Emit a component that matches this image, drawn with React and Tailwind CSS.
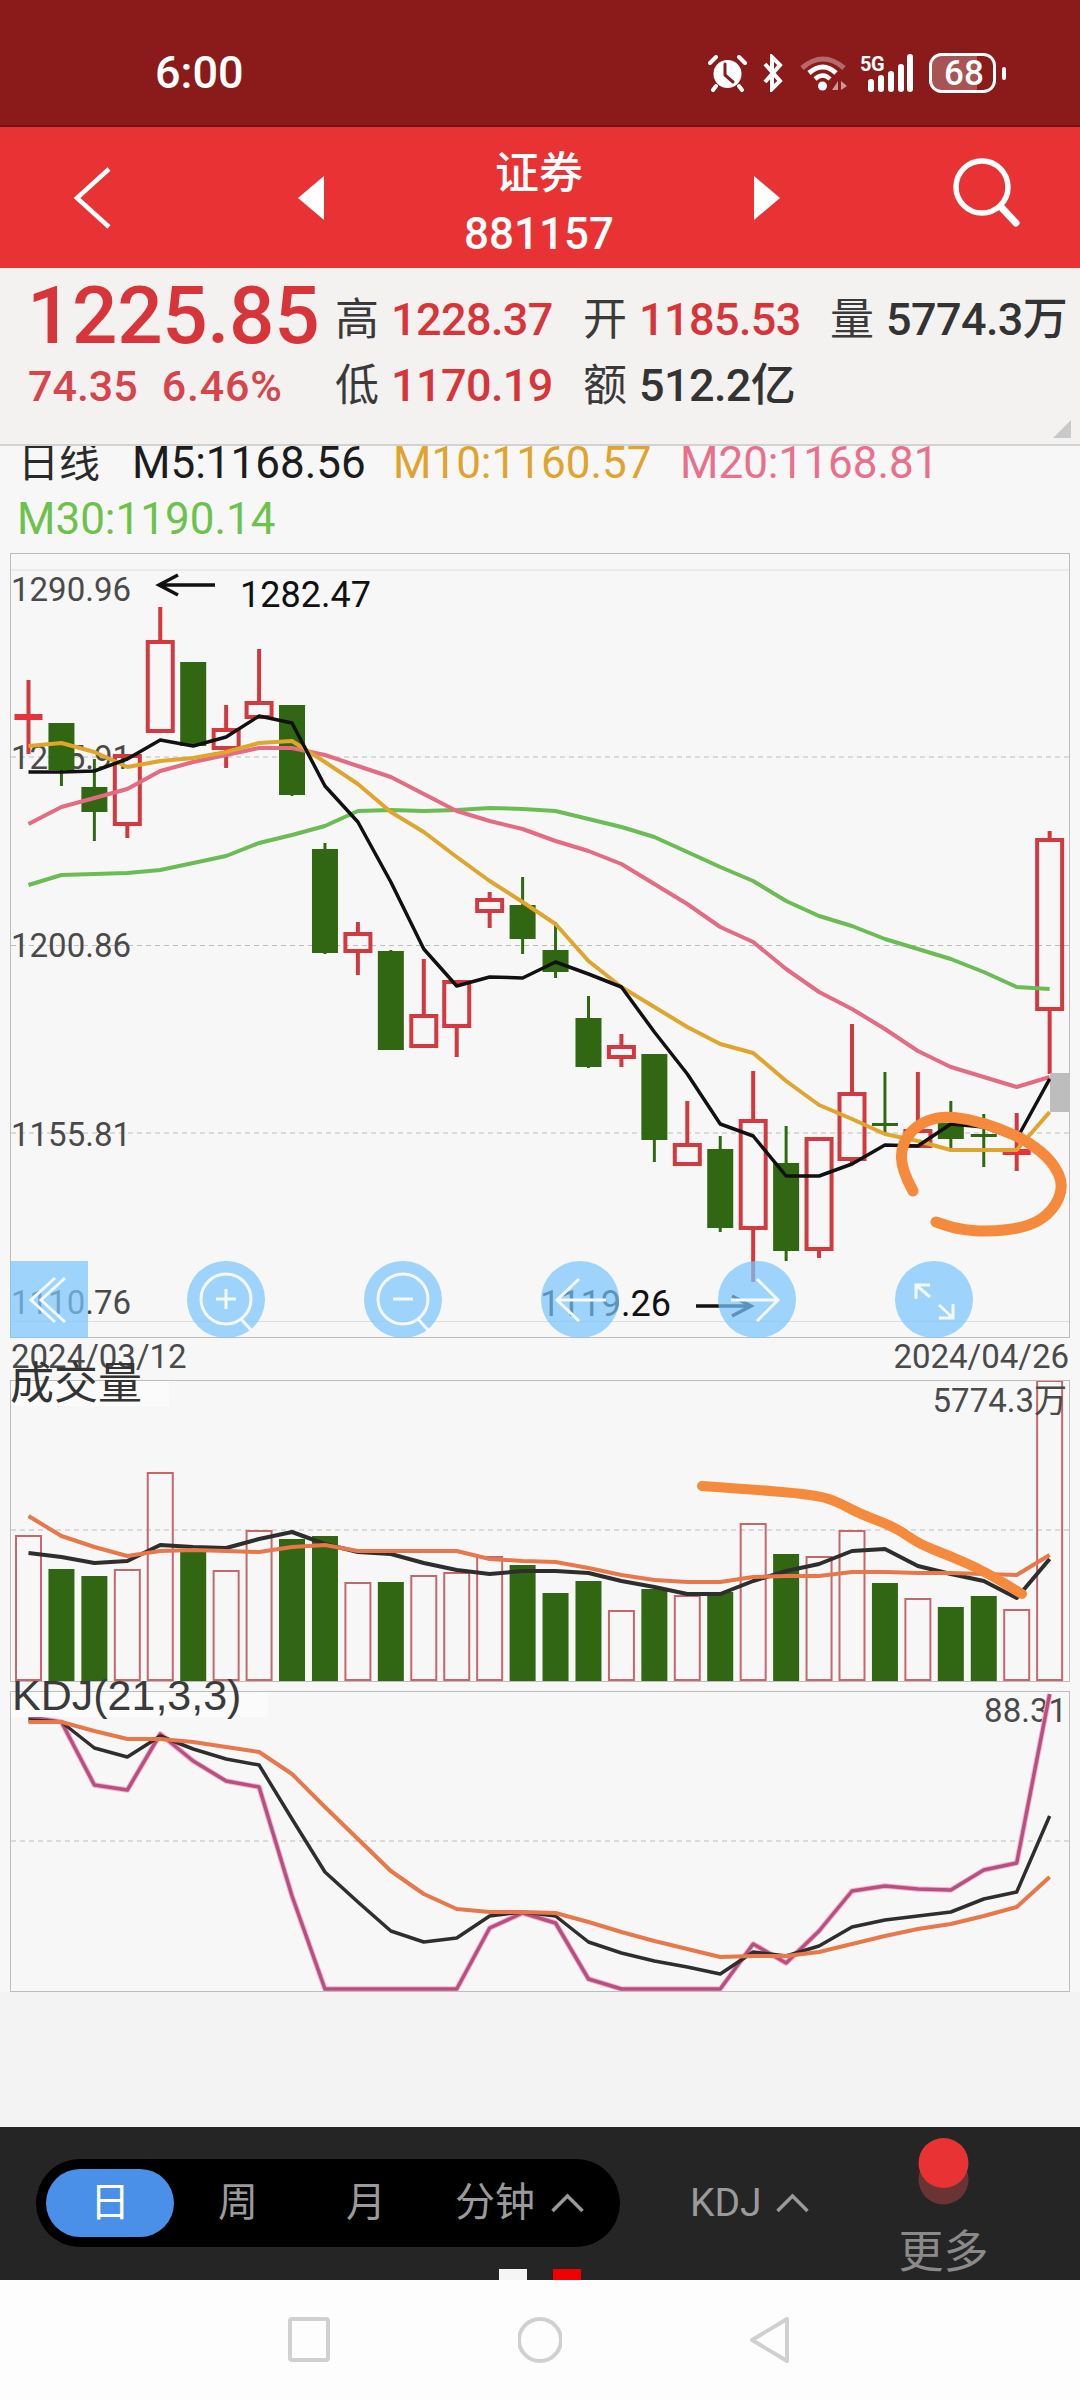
import React from "react";

const X = (i) => 28.5 + 32.94 * i;

// wickTop, bodyTop, bodyBottom, wickBottom, kind (g / r / gd, rd = doji)
const candles = [
  [681, 715, 721, 755, "rd"],
  [724, 724, 771, 787, "g"],
  [760, 788, 813, 842, "g"],
  [757, 757, 825, 839, "r"],
  [608, 643, 732, 734, "r"],
  [663, 663, 747, 747, "g"],
  [706, 731, 749, 769, "r"],
  [650, 704, 718, 718, "r"],
  [706, 706, 796, 797, "g"],
  [844, 850, 954, 955, "g"],
  [923, 935, 952, 976, "r"],
  [951, 952, 1051, 1051, "g"],
  [960, 1017, 1047, 1048, "r"],
  [983, 983, 1027, 1058, "r"],
  [893, 901, 912, 929, "r"],
  [878, 906, 940, 955, "g"],
  [923, 951, 973, 979, "g"],
  [997, 1019, 1068, 1069, "g"],
  [1035, 1048, 1058, 1068, "r"],
  [1055, 1055, 1141, 1163, "g"],
  [1102, 1146, 1165, 1165, "r"],
  [1137, 1150, 1229, 1233, "g"],
  [1072, 1122, 1229, 1283, "r"],
  [1127, 1164, 1252, 1262, "g"],
  [1140, 1140, 1250, 1259, "r"],
  [1025, 1095, 1160, 1165, "r"],
  [1073, 1124, 1127, 1135, "gd"],
  [1073, 1132, 1147, 1149, "r"],
  [1102, 1124, 1140, 1150, "g"],
  [1115, 1135, 1138, 1168, "gd"],
  [1114, 1150, 1156, 1172, "rd"],
  [832, 841, 1010, 1075, "r"],
];

const m5 = [773, 773, 772, 760, 741, 747, 738, 717, 724, 787, 823, 883, 950, 987, 978, 979, 963, 975, 988, 1033, 1075, 1125, 1137, 1177, 1177, 1165, 1146, 1147, 1125, 1128, 1140, 1080];
const m10 = [747, 744, 753, 768, 762, 759, 753, 744, 742, 763, 785, 813, 833, 858, 882, 903, 925, 962, 988, 1008, 1028, 1045, 1054, 1082, 1106, 1120, 1135, 1142, 1151, 1151, 1151, 1113];
const m20 = [825, 808, 799, 790, 772, 763, 756, 749, 749, 756, 767, 778, 795, 812, 822, 830, 842, 852, 865, 885, 905, 928, 943, 970, 993, 1010, 1030, 1052, 1068, 1078, 1088, 1078];
const m30 = [886, 876, 875, 874, 871, 864, 857, 844, 836, 827, 812, 811, 812, 811, 809, 810, 812, 820, 828, 838, 853, 868, 882, 902, 917, 927, 940, 950, 960, 973, 988, 990];

const volumes = [
  [1537, "r"], [1570, "g"], [1577, "g"], [1571, "r"], [1474, "r"], [1552, "g"], [1572, "r"], [1532, "r"],
  [1540, "g"], [1537, "g"], [1584, "r"], [1583, "g"], [1577, "r"], [1574, "r"], [1558, "r"], [1566, "g"],
  [1594, "g"], [1582, "g"], [1612, "r"], [1590, "g"], [1597, "r"], [1593, "g"], [1525, "r"], [1555, "g"],
  [1558, "r"], [1532, "r"], [1584, "g"], [1600, "r"], [1608, "g"], [1597, "g"], [1611, "r"], [1382, "r"],
];
const volBlack = [1554, 1558, 1564, 1562, 1546, 1548, 1549, 1540, 1533, 1545, 1553, 1555, 1564, 1571, 1575, 1572, 1572, 1574, 1582, 1588, 1595, 1595, 1582, 1572, 1565, 1552, 1550, 1567, 1575, 1582, 1599, 1560];
const volOrange = [1517, 1537, 1548, 1557, 1552, 1551, 1552, 1553, 1548, 1546, 1552, 1552, 1552, 1552, 1560, 1562, 1563, 1569, 1576, 1581, 1583, 1583, 1578, 1577, 1577, 1573, 1573, 1574, 1574, 1575, 1576, 1556];

const kdjK = [1721, 1723, 1749, 1758, 1737, 1750, 1760, 1766, 1820, 1873, 1903, 1932, 1943, 1939, 1917, 1913, 1917, 1943, 1954, 1962, 1968, 1975, 1953, 1957, 1947, 1928, 1921, 1917, 1913, 1900, 1893, 1817];
const kdjD = [1723, 1723, 1732, 1740, 1740, 1743, 1748, 1753, 1775, 1808, 1840, 1872, 1895, 1910, 1913, 1913, 1914, 1923, 1933, 1942, 1950, 1958, 1957, 1957, 1953, 1945, 1937, 1930, 1925, 1917, 1908, 1878];
const kdjJ = [1718, 1723, 1786, 1791, 1735, 1762, 1782, 1788, 1897, 1990, 1990, 1990, 1990, 1990, 1929, 1914, 1924, 1980, 1990, 1990, 1990, 1990, 1945, 1964, 1932, 1892, 1887, 1890, 1891, 1871, 1864, 1695];

const linePts = (ys) => ys.map((y, i) => `${X(i)},${y}`).join(" ");

// hand drawn strokes, smoothed through midpoints
const smooth = (pts) => {
  let d = `M${pts[0][0]} ${pts[0][1]}`;
  for (let i = 1; i < pts.length - 1; i++) {
    const mx = (pts[i][0] + pts[i + 1][0]) / 2;
    const my = (pts[i][1] + pts[i + 1][1]) / 2;
    d += ` Q${pts[i][0]} ${pts[i][1]} ${mx} ${my}`;
  }
  const last = pts[pts.length - 1];
  return d + ` L${last[0]} ${last[1]}`;
};

const circleStroke = smooth([
  [913, 1192], [902, 1172], [901, 1147], [915, 1127], [939, 1117], [970, 1120], [1001, 1130], [1029, 1143],
  [1053, 1163], [1064, 1187], [1053, 1212], [1029, 1228], [988, 1233], [957, 1230], [936, 1223],
]);
const volStroke = smooth([
  [702, 1487], [760, 1491], [815, 1496], [836, 1502], [860, 1515], [895, 1528], [919, 1545], [950, 1557], [984, 1572], [1022, 1595],
]);

function Candle({ c, i }) {
  const [top, bodyTop, bodyBottom, bottom, kind] = c;
  const x = X(i);
  const green = kind[0] === "g";
  const wick = green ? "#2f6a12" : "#d2393f";
  const wickW = green ? 3 : 4;
  return (
    <g>
      <line x1={x} x2={x} y1={top} y2={bodyTop} stroke={wick} strokeWidth={wickW} />
      <line x1={x} x2={x} y1={bodyBottom} y2={bottom} stroke={wick} strokeWidth={wickW} />
      {kind === "g" && <rect x={x - 13} y={bodyTop} width={26} height={bodyBottom - bodyTop} fill="#316612" />}
      {kind === "r" && (
        <rect x={x - 12.5} y={bodyTop} width={25} height={bodyBottom - bodyTop} fill="none" stroke="#d03a40" strokeWidth={4} />
      )}
      {kind === "gd" && <rect x={x - 13} y={bodyTop} width={26} height={3} fill="#316612" />}
      {kind === "rd" && <rect x={x - 14} y={bodyTop} width={28} height={bodyBottom - bodyTop} fill="#e8323a" />}
    </g>
  );
}

function RoundBtn({ children, square }) {
  return (
    <div className={`w-[78px] h-[77px] bg-[rgba(124,198,252,0.72)] ${square ? "" : "rounded-full"}`}>
      <svg viewBox="0 0 78 77" className="w-full h-full" fill="none" stroke="#f4f9fd" strokeWidth="3">
        {children}
      </svg>
    </div>
  );
}

function Cell({ label, value, red, width }) {
  return (
    <div className={`flex items-center ${width}`}>
      <span className="-ml-[2px] text-[44px] text-[#3a3a3a]">{label}</span>
      <span className={`ml-[12px] text-[45px] font-medium tracking-[-0.6px] ${red ? "text-[#d8353b]" : "text-[#333333]"}`}>{value}</span>
    </div>
  );
}

function Chevron() {
  return (
    <svg viewBox="0 0 33 20" className="w-[33px] h-[20px]" fill="none" stroke="#9a9a9a" strokeWidth="3.5">
      <path d="M1.5 18 L16.5 3 L31.5 18" />
    </svg>
  );
}

export default function App() {
  return (
    <div className="w-[1080px] h-[2400px] flex flex-col overflow-hidden bg-[#f7f7f7] font-['Roboto','Noto_Sans_CJK_SC',sans-serif]">
      {/* status bar */}
      <div className="h-[127px] pt-[20px] flex items-center bg-[#8b1b1b] border-b-2 border-[#6f1414] text-white">
        <span className="ml-[155px] text-[45px] font-medium">6:00</span>
        <div className="ml-auto mr-[74px] flex items-center">
          <svg viewBox="0 0 39 38" className="w-[39px] h-[38px]" fill="none" stroke="#fff" strokeLinecap="round">
            <circle cx="19.5" cy="20" r="14" fill="#fff" stroke="none" />
            <path d="M17 10 L17 21 L25 28" stroke="#8b1b1b" strokeWidth="3" />
            <path d="M2 9 L8 3 M37 9 L31 3 M8 32 L5 36 M31 32 L34 36" strokeWidth="4" />
          </svg>
          <svg viewBox="0 0 21 38" className="ml-[15px] w-[21px] h-[38px]" fill="none" stroke="#fff" strokeWidth="4">
            <path d="M3 10 L18 27 L10 35 L10 3 L18 11 L3 28" />
          </svg>
          <svg viewBox="0 0 47 37" className="ml-[17px] w-[47px] h-[37px]" fill="none" stroke="#fff" strokeWidth="5">
            <path d="M2 14 Q23 -4 44 14" opacity="0.35" />
            <path d="M9 19 Q23 7 36 19" />
            <path d="M15 25 Q23 18 30 25" strokeWidth="4.5" />
            <circle cx="22.5" cy="32" r="4.5" fill="#fff" stroke="none" />
            <path d="M32 36 L38 27 L38 36 Z M41 27 L47 32 L41 36 Z" fill="#fff" stroke="none" opacity="0.55" />
          </svg>
          <div className="relative ml-[13px] w-[53px] h-[38px]">
            <svg viewBox="0 0 53 38" className="w-[53px] h-[38px]" fill="#fff">
              <rect x="8" y="25" width="6" height="13" rx="3" />
              <rect x="18" y="21" width="6" height="17" rx="3" />
              <rect x="28" y="17" width="6" height="21" rx="3" />
              <rect x="38" y="10" width="6" height="28" rx="3" />
              <rect x="47" y="0" width="6" height="38" rx="3" />
            </svg>
            <span className="absolute left-0 top-0 text-[20px] leading-[20px] font-bold tracking-[-0.5px]">5G</span>
          </div>
          <svg viewBox="0 0 77 40" className="ml-[16px] w-[77px] h-[40px]">
            <path d="M13 2 H48 V38 H13 A11 11 0 0 1 2 27 V13 A11 11 0 0 1 13 2 Z" fill="#fff" opacity="0.25" />
            <rect x="1.5" y="1.5" width="64" height="37" rx="11" fill="none" stroke="#fff" strokeWidth="3" />
            <rect x="73" y="14" width="4" height="13" rx="2" fill="#fff" />
            <text x="35" y="32" fontSize="35" fontWeight="500" fill="#fff" textAnchor="middle">68</text>
          </svg>
        </div>
      </div>

      {/* title bar */}
      <div className="h-[141px] pl-[72px] flex items-center bg-[#e83233] text-white">
        <svg viewBox="0 0 41 62" className="w-[41px] h-[62px]" fill="none" stroke="#fff" strokeWidth="4.5">
          <path d="M37 2 L5 31 L37 60" />
        </svg>
        <svg viewBox="0 0 26 44" className="ml-[185px] w-[26px] h-[44px]" fill="#fff">
          <path d="M26 0 V44 L0 22 Z" />
        </svg>
        <div className="w-[430px] pt-[12px] flex flex-col items-center font-medium text-[44px]">
          <span className="h-[60px] leading-[60px]">证券</span>
          <span className="h-[60px] leading-[60px]">881157</span>
        </div>
        <svg viewBox="0 0 26 44" className="w-[26px] h-[44px]" fill="#fff">
          <path d="M0 0 V44 L26 22 Z" />
        </svg>
        <svg viewBox="0 0 72 72" className="ml-[170px] w-[72px] h-[72px] -mt-[10px]" fill="none" stroke="#fff" strokeWidth="5.5">
          <circle cx="32" cy="30" r="26" />
          <path d="M51 50 L66 66" strokeLinecap="round" strokeWidth="7" />
        </svg>
      </div>

      {/* quote */}
      <div className="relative h-[178px] pt-[20px] bg-[#f3f2f1] border-b-2 border-[#d2d2d2]">
        <div className="flex items-center h-[64px]">
          <div className="w-[337px] pl-[27px] text-[80px] leading-[56px] mb-[8px] font-medium tracking-[-0.4px] text-[#d8353b]">1225.85</div>
          <Cell label="高" value="1228.37" red width="w-[248px]" />
          <Cell label="开" value="1185.53" red width="w-[247px]" />
          <Cell label="量" value="5774.3万" />
        </div>
        <div className="flex items-center h-[64px] mt-[2px]">
          <div className="w-[337px] pl-[28px] flex gap-[24px] text-[43px] font-medium text-[#d8444a]">
            <span>74.35</span>
            <span className="tracking-[0.8px]">6.46%</span>
          </div>
          <Cell label="低" value="1170.19" red width="w-[248px]" />
          <Cell label="额" value="512.2亿" />
        </div>
        <svg viewBox="0 0 18 18" className="absolute right-[9px] bottom-[6px] w-[18px] h-[18px]" fill="#c9c9c9">
          <path d="M18 0 V18 H0 Z" />
        </svg>
      </div>

      {/* moving average legend */}
      <div className="h-[107px] text-[44px] leading-[34px]">
        <div className="h-[34px] pl-[18px] flex">
          <span className="w-[114px] text-[41px] text-[#2a2a2a]">日线</span>
          <span className="w-[261px] text-[#1c1c1c]">M5:1168.56</span>
          <span className="w-[287px] text-[#e0a32e]">M10:1160.57</span>
          <span className="text-[#e8708a]">M20:1168.81</span>
        </div>
        <div className="h-[34px] mt-[22px] pl-[17px] text-[#6cc24a]">M30:1190.14</div>
      </div>

      {/* k line panel */}
      <div className="relative ml-[10px] w-[1060px] h-[785px] border border-[#bdbdbd]">
        <svg viewBox="11 555 1058 783" className="block w-full h-full">
          <line x1="11" x2="1069" y1="571" y2="571" stroke="#dedede" />
          <line x1="11" x2="1069" y1="1322.5" y2="1322.5" stroke="#dedede" />
          {[758, 946.5, 1134].map((y) => (
            <line key={y} x1="11" x2="1069" y1={y} y2={y} stroke="#bdbdbd" strokeDasharray="5 4" />
          ))}
          <g fontSize="33" fill="#4a4a4a">
            <text x="11" y="602">1290.96</text>
            <text x="11" y="770">1245.91</text>
            <text x="11" y="958">1200.86</text>
            <text x="11" y="1147">1155.81</text>
            <text x="11" y="1315">1110.76</text>
          </g>
          <g fontSize="36" fill="#111">
            <text x="240" y="608">1282.47</text>
            <text x="540" y="1317">1119.26</text>
          </g>
          <path d="M215 586 H160 M178 576 L159 586 L178 596" fill="none" stroke="#111" strokeWidth="3.5" />
          <path d="M696 1307 H750 M732 1297 L751 1307 L732 1317" fill="none" stroke="#111" strokeWidth="3.5" />
          {candles.map((c, i) => (
            <Candle key={i} c={c} i={i} />
          ))}
          <rect x="1050" y="1074" width="19" height="39" fill="#bdbdbd" />
          <g fill="none" strokeLinejoin="round">
            <polyline points={linePts(m30)} stroke="#6cbc55" strokeWidth="4" />
            <polyline points={linePts(m20)} stroke="#e36b82" strokeWidth="4" />
            <polyline points={linePts(m10)} stroke="#e0a52c" strokeWidth="4" />
            <polyline points={linePts(m5)} stroke="#111" strokeWidth="3.5" />
            <path d={circleStroke} stroke="#f58a3c" strokeWidth="11" strokeLinecap="round" />
          </g>
        </svg>
        <div className="absolute -left-px -bottom-px flex gap-[99px]">
          <RoundBtn square>
            <path d="M55 17 L31 39 L55 61 M45 17 L21 39 L45 61" />
          </RoundBtn>
          <RoundBtn>
            <circle cx="39" cy="38" r="25" />
            <path d="M54 58 L64 69" />
            <path d="M29 38 H49 M39 28 V48" />
          </RoundBtn>
          <RoundBtn>
            <circle cx="39" cy="38" r="25" />
            <path d="M54 58 L64 69" />
            <path d="M29 38 H49" />
          </RoundBtn>
          <RoundBtn>
            <path d="M65 39 H16 M38 18 L16 39 L38 60" />
          </RoundBtn>
          <RoundBtn>
            <path d="M13 39 H60 M39 18 L60 39 L39 60" />
          </RoundBtn>
          <RoundBtn>
            <path d="M21 24 L35 36 M21 38 V24 H35 M58 57 L44 44 M58 43 V57 H44" />
          </RoundBtn>
        </div>
      </div>

      {/* date range */}
      <div className="h-[42px] pl-[11px] pr-[11px] flex justify-between text-[33px] leading-[38px] text-[#4a4a4a]">
        <span>2024/03/12</span>
        <span>2024/04/26</span>
      </div>

      {/* volume panel */}
      <div className="relative ml-[10px] w-[1060px] h-[302px] mb-[9px] border border-[#bdbdbd]">
        <svg viewBox="11 1382 1058 300" className="block w-full h-full">
          <line x1="11" x2="1069" y1="1531" y2="1531" stroke="#bdbdbd" strokeDasharray="5 4" />
          {volumes.map(([top, kind], i) =>
            kind === "g" ? (
              <rect key={i} x={X(i) - 13} y={top} width={26} height={1682 - top} fill="#316612" />
            ) : (
              <rect key={i} x={X(i) - 12.5} y={top} width={25} height={1681 - top} fill="none" stroke="#c4686c" strokeWidth="2" />
            )
          )}
          <text x="1067" y="1413" fontSize="33" fill="#4a4a4a" textAnchor="end">5774.3万</text>
          <g fill="none" strokeLinejoin="round">
            <polyline points={linePts(volBlack)} stroke="#2e2e2e" strokeWidth="4" />
            <polyline points={linePts(volOrange)} stroke="#e8784a" strokeWidth="4" />
            <path d={volStroke} stroke="#f58a3c" strokeWidth="10" strokeLinecap="round" />
          </g>
        </svg>
        <div className="absolute left-0 top-0 w-[158px] h-[25px] bg-[#fbfbfb]" />
        <div className="absolute -left-[1px] -top-[19px] text-[44px] leading-[44px] text-[#333333]">成交量</div>
      </div>

      {/* kdj panel */}
      <div className="relative ml-[10px] w-[1060px] h-[301px] border border-[#bdbdbd]">
        <svg viewBox="11 1693 1058 299" className="block w-full h-full">
          <line x1="11" x2="1069" y1="1842" y2="1842" stroke="#bdbdbd" strokeDasharray="5 4" />
          <text x="1067" y="1723" fontSize="33" fill="#4a4a4a" textAnchor="end">88.31</text>
          <g fill="none" strokeLinejoin="round">
            <polyline points={linePts(kdjJ)} stroke="#f3b4d2" strokeWidth="5.5" />
            <polyline points={linePts(kdjJ)} stroke="#b8507f" strokeWidth="3.5" />
            <polyline points={linePts(kdjK)} stroke="#2e2e2e" strokeWidth="3.5" />
            <polyline points={linePts(kdjD)} stroke="#e8784a" strokeWidth="4" />
          </g>
        </svg>
        <div className="absolute left-0 top-0 w-[257px] h-[25px] bg-[#fbfbfb]" />
        <div className="absolute left-[1px] -top-[21px] text-[43px] leading-[48px] text-[#3a3a3a] font-['Liberation_Sans',sans-serif]">KDJ(21,3,3)</div>
      </div>

      <div className="flex-1 bg-[#f3f3f3]" />

      {/* period toolbar */}
      <div className="relative h-[153px] pt-[32px] flex items-start bg-[#252525] text-[#9a9a9a]">
        <div className="ml-[36px] w-[584px] h-[88px] pl-[10px] flex items-center rounded-full bg-black text-[40px]">
          <div className="w-[128px] h-[68px] flex items-center justify-center rounded-full bg-[#4a90e8] text-white">日</div>
          <div className="w-[128px] text-center">周</div>
          <div className="w-[128px] text-center">月</div>
          <div className="ml-[25px] flex items-center gap-[16px]">
            <span>分钟</span>
            <Chevron />
          </div>
        </div>
        <div className="ml-[70px] h-[88px] flex items-center gap-[14px] text-[39px]">
          <span>KDJ</span>
          <Chevron />
        </div>
        <div className="ml-[90px] -mt-[21px] w-[90px] flex flex-col items-center">
          <svg viewBox="0 0 51 67" className="w-[51px] h-[67px]">
            <circle cx="25.5" cy="41.5" r="25" fill="#6b3434" />
            <circle cx="25.5" cy="25" r="25" fill="#e83233" />
          </svg>
          <span className="mt-[25px] text-[45px] leading-[45px] text-[#8a8a8a]">更多</span>
        </div>
        <div className="absolute left-[499px] bottom-0 w-[28px] h-[11px] bg-[#f5f5f5]" />
        <div className="absolute left-[553px] bottom-0 w-[28px] h-[11px] bg-[#f00000]" />
      </div>

      {/* android nav */}
      <div className="h-[120px] pl-[287px] flex items-center bg-[#fdfdfd]">
        <svg viewBox="0 0 44 48" className="w-[44px] h-[48px]" fill="none" stroke="#d0d0d0" strokeWidth="4">
          <rect x="3" y="3" width="38" height="41" rx="2" />
        </svg>
        <svg viewBox="0 0 44 48" className="ml-[187px] w-[44px] h-[48px]" fill="none" stroke="#d0d0d0" strokeWidth="4">
          <circle cx="22" cy="24" r="21" />
        </svg>
        <svg viewBox="0 0 44 48" className="ml-[187px] w-[44px] h-[48px]" fill="none" stroke="#d0d0d0" strokeWidth="4" strokeLinejoin="round">
          <path d="M38 3 V45 L3 24 Z" />
        </svg>
      </div>
    </div>
  );
}
